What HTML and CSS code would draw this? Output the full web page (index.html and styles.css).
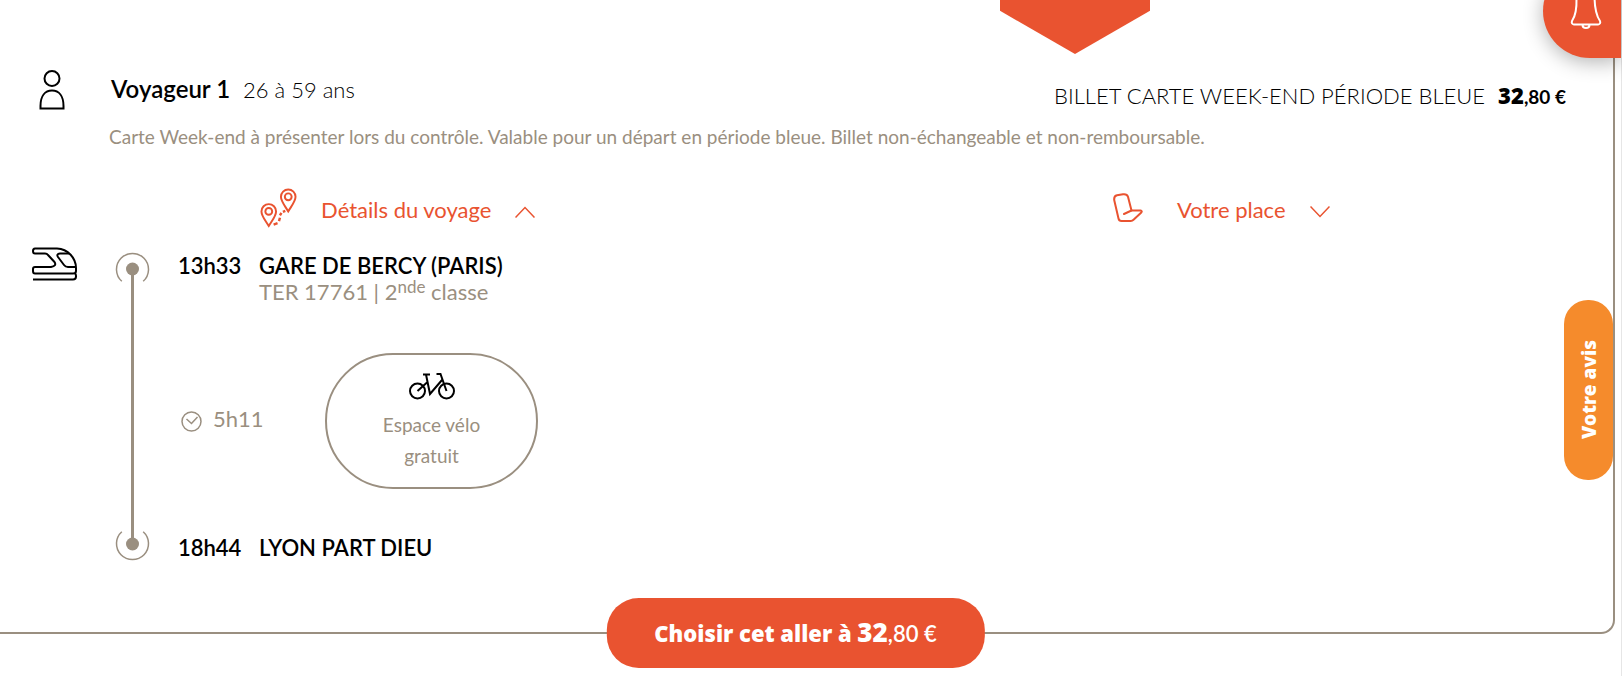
FILE: index.html
```html
<!DOCTYPE html>
<html lang="fr">
<head>
<meta charset="utf-8">
<title>Choix du trajet aller</title>
<link rel="stylesheet" href="styles.css">
</head>
<body>
<main class="page">
  <section class="offer">
    <div class="marker" aria-hidden="true"></div>

    <header class="traveller">
      <svg class="traveller-icon" width="26" height="40" viewBox="0 0 26 40" fill="none" stroke="#000" stroke-width="2"><circle cx="13" cy="8.500" r="7.500"/><path d="M1.500 38.500V36C1.500 26 6 20.500 13 20.500S24.500 26 24.500 36v2.500z"/></svg>
      <div class="traveller-name"><strong>Voyageur 1</strong><span>26 à 59 ans</span></div>
      <div class="fare"><span>BILLET CARTE WEEK-END PÉRIODE BLEUE</span><span class="price"><b>32</b>,80 €</span></div>
    </header>
    <p class="conditions">Carte Week-end à présenter lors du contrôle. Valable pour un départ en période bleue. Billet non-échangeable et non-remboursable.</p>

    <nav class="tabs">
      <button class="tab" type="button" aria-expanded="true">
        <svg width="37" height="40" viewBox="0 0 38 40" fill="none" stroke="#e95330" stroke-width="2"><path d="M9 38.500C5 32 1.500 28 1.500 23.500a7.500 7.500 0 0 1 15 0C16.500 28 13 32 9 38.500z"/><circle cx="9" cy="23.500" r="3.500"/><path d="M29 23.500C25 17 21.500 13 21.500 8.500a7.500 7.500 0 0 1 15 0C36.500 13 33 17 29 23.500z"/><circle cx="29" cy="8.500" r="3.500"/><path stroke-width="2.500" d="M14 37l4-1.500M19.500 33.500l1-3.500M20.500 27.500l1.500-2.500M23.500 24l2.500-1"/></svg>
        <span>Détails du voyage</span>
        <svg width="20" height="12" viewBox="0 0 20 12" fill="none" stroke="#e95330" stroke-width="1.500"><path d="M.500 11.500 10 1.500l9.500 10"/></svg>
      </button>
      <button class="tab" type="button" aria-expanded="false">
        <svg class="seat" width="30" height="30" viewBox="0 0 30 30" fill="none" stroke="#e95330" stroke-width="2" stroke-linecap="round" stroke-linejoin="round"><path d="M1.200 7Q.800 3 4 2.300L10 1.200q4-.5 5 2.500l3.500 13.800h9q2 .5.800 2l-7.500 7q-1.500 1.500-3 1.500H8.500q-2.500 0-3-2.500z"/><path d="M18.500 17.500 11 21"/></svg>
        <span>Votre place</span>
        <svg width="20" height="12" viewBox="0 0 20 12" fill="none" stroke="#e95330" stroke-width="1.500"><path d="M.500.500 10 10.500l9.500-10"/></svg>
      </button>
    </nav>

    <div class="journey">
      <svg class="train" width="46" height="35" viewBox="0 0 46 35" fill="none" stroke="#000" stroke-width="2" stroke-linejoin="round"><path d="M1 4Q1 1.500 3 1.500h22C36 2 44 11 44 21v3q0 2.500-3 2.500H3q-2 0-2-2.500v-2q0-2 2-2h16q6-1 3.500-5L16 8q-1-1.500-3-1.500H3Q1 6.500 1 4z"/><path d="M37 6.500H28q-4 .5-2 3.500l6 8q1.500 2 4 2h8M1 32.500h40q3 0 3-3t-1.500-3"/></svg>
      <div class="rail" aria-hidden="true">
        <svg width="35" height="34" viewBox="0 0 35 34" fill="none" stroke="#9a8f80"><path stroke-width="1.500" d="M6.800 29.300a16 16 0 1 1 21.400 0"/><path stroke-width="3" d="M17.500 17v17"/><circle cx="17.500" cy="17" r="6.500" fill="#9a8f80" stroke="none"/></svg>
        <span class="rail-line"></span>
        <svg width="35" height="34" viewBox="0 0 35 34" fill="none" stroke="#9a8f80"><path stroke-width="1.500" d="M6.800 4.700a16 16 0 1 0 21.400 0"/><path stroke-width="3" d="M17.500 17V0"/><circle cx="17.500" cy="17" r="6.500" fill="#9a8f80" stroke="none"/></svg>
      </div>
      <div class="legs">
        <div class="stop">
          <time>13h33</time>
          <div class="station">GARE DE BERCY (PARIS)<div class="train-info">TER 17761 | 2<sup>nde</sup> classe</div></div>
        </div>
        <div class="middle">
          <div class="duration">
            <svg width="21" height="21" viewBox="0 0 21 21" fill="none" stroke="#9a8f80" stroke-width="1.500"><circle cx="10.500" cy="10.500" r="9.500"/><path d="m5.500 8 5 4.500 6-6.500"/></svg>
            <span>5h11</span>
          </div>
          <div class="bike">
            <svg width="46" height="28" viewBox="0 0 46 28" fill="none" stroke="#000" stroke-width="2"><circle cx="8.500" cy="19" r="7.500"/><circle cx="37.500" cy="19" r="7.500"/><path d="M8.500 19 18 10.500M14 2.500h7M17 2.500l4 19.500L33 8M27.500 2h4l6 17"/></svg>
            <span>Espace vélo gratuit</span>
          </div>
        </div>
        <div class="stop">
          <time>18h44</time>
          <div class="station">LYON PART DIEU</div>
        </div>
      </div>
    </div>

    <button class="choose" type="button">Choisir cet aller à <b>32</b><span>,80 €</span></button>
  </section>
</main>

<button class="alert" type="button" aria-label="Alertes">
  <svg width="34" height="41" viewBox="0 0 34 41" fill="none" stroke="#fff" stroke-width="2" stroke-linejoin="round"><path d="M7.500 10Q8 26 3 33q-1 3 2 3.500h24q3-.5 2-3.500-5-7-5.500-23M13.500 37q0 3 3.500 3t3.500-3"/></svg>
</button>
<button class="feedback" type="button"><span>Votre avis</span></button>
</body>
</html>
```
FILE: styles.css
```css
* { box-sizing: border-box; }

body {
  margin: 0;
  background: #fff;
  color: #000;
  font-family: Lato, "Open Sans", sans-serif;
  font-size: 22px;
  font-weight: 300;
  line-height: 26px;
  overflow: hidden;
}

button {
  border: 0;
  background: none;
  padding: 0;
  font: inherit;
  cursor: pointer;
}

svg { display: block; flex: none; }

.page {
  min-height: 100vh;
  border-right: 1px solid #e6e6e6;
  padding-right: 6px;
}

.offer {
  position: relative;
  margin-left: -24px;
  padding: 70px 0 71px 24px;
  border: 2px solid #9a8f80;
  border-top: 0;
  border-radius: 0 0 14px 14px;
}

.marker {
  position: absolute;
  top: 0;
  right: 463px;
  width: 150px;
  height: 54px;
  background: #e95330;
  clip-path: polygon(0 0, 100% 0, 100% 20%, 50% 100%, 0 20%);
}

.traveller {
  display: flex;
  align-items: flex-start;
  padding: 0 47px 0 37px;
}

.traveller-name {
  display: flex;
  align-items: baseline;
  gap: 13px;
  margin: 6px 0 0 46px;
}

.traveller-name strong { font-size: 24px; font-weight: 600; }

.fare {
  display: flex;
  align-items: baseline;
  gap: 13px;
  margin: 12px 0 0 auto;
}

.price { font-size: 19px; font-weight: 700; }

.price b {
  font-family: "Open Sans", sans-serif;
  font-size: 22px;
  font-weight: 800;
}

.conditions {
  margin: 14px 0 0;
  padding-left: 107px;
  color: #9a8f80;
  font-size: 19px;
  font-weight: 400;
}

.tabs {
  display: grid;
  grid-template-columns: 1fr 1fr;
  gap: 64px;
  padding: 38px 12px 0 16px;
}

.tab {
  display: flex;
  align-items: center;
  justify-content: center;
  gap: 24px;
  height: 40px;
  color: #e95330;
  font-weight: 400;
}

.tab span { padding-top: 4px; }
.tab svg:last-child { margin-top: 8px; }
.seat { margin-right: 10px; }

.journey {
  display: flex;
  padding-left: 30px;
  margin-top: 19px;
}

.rail {
  display: flex;
  flex-direction: column;
  align-items: center;
  margin: 5px 0 0 37px;
}

.rail-line {
  flex: 1;
  width: 3px;
  background: #9a8f80;
}

.legs { margin-left: 28px; padding-top: 6px; }

.stop {
  display: grid;
  grid-template-columns: 63px auto;
  gap: 18px;
  font-weight: 600;
}

.train-info { color: #9a8f80; font-weight: 400; }

.train-info sup {
  font-size: 17px;
  line-height: 0;
  vertical-align: 7px;
}

.middle {
  display: flex;
  align-items: center;
  gap: 64px;
  margin: 48px 0 46px;
  color: #9a8f80;
  font-weight: 400;
}

.duration {
  display: flex;
  align-items: center;
  gap: 11px;
  width: 83px;
  padding-left: 3px;
}

.duration span { padding-bottom: 4px; }

.bike {
  display: flex;
  flex-direction: column;
  align-items: center;
  gap: 9px;
  width: 213px;
  padding: 17px 48px 16px;
  border: 2px solid #9a8f80;
  border-radius: 68px;
  font-size: 19px;
  line-height: 31px;
  text-align: center;
}

.choose {
  position: absolute;
  left: 50%;
  bottom: -36px;
  transform: translateX(-50%);
  padding: 19px 48px;
  border-radius: 32px;
  background: #e95330;
  color: #fff;
  font-family: "Open Sans", sans-serif;
  font-size: 22px;
  font-weight: 800;
  line-height: 31px;
  white-space: nowrap;
}

.choose b { font-size: 26px; font-weight: 800; }

.choose span {
  font-family: Lato, sans-serif;
  font-size: 22px;
  font-weight: 600;
}

.alert {
  position: fixed;
  top: -36px;
  right: 1px;
  display: flex;
  align-items: flex-end;
  width: 78px;
  height: 94px;
  padding: 0 0 29px 26px;
  border-radius: 47px 0 0 47px;
  background: #e95330;
  box-shadow: 0 4px 20px rgba(0, 0, 0, 0.3);
}

.feedback {
  position: fixed;
  top: 300px;
  right: 9px;
  display: flex;
  align-items: center;
  justify-content: center;
  width: 49px;
  height: 180px;
  border-radius: 24px;
  background: #f58b2c;
  color: #fff;
  font-family: "Open Sans", sans-serif;
  font-size: 19px;
  font-weight: 800;
}

.feedback span {
  writing-mode: vertical-rl;
  transform: rotate(180deg);
}
```
